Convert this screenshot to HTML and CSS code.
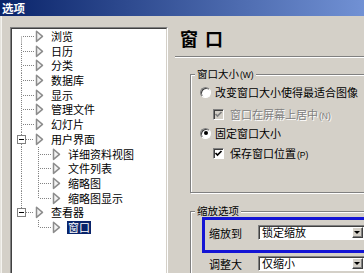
FILE: index.html
```html
<!DOCTYPE html>
<html>
<head>
<meta charset="utf-8">
<link rel="stylesheet" href="styles.css">
</head>
<body>
<div class="window">
  <div class="titlebar">选项</div>
  <div class="main">
    <div class="tree-outer">
      <div class="tree">
        <div class="row"><svg class="guide l1" viewBox="0 0 23 14.7"><path d="M9.5 7.5V14.7M11 7.5H22"/></svg><svg class="ico" viewBox="0 0 9 14.7"><path d="M1.5 2.3L7.5 7.35L1.5 12.4Z"/></svg><span class="lbl">浏览</span></div>
        <div class="row"><svg class="guide l1" viewBox="0 0 23 14.7"><path d="M9.5 0V14.7M11 7.5H22"/></svg><svg class="ico" viewBox="0 0 9 14.7"><path d="M1.5 2.3L7.5 7.35L1.5 12.4Z"/></svg><span class="lbl">日历</span></div>
        <div class="row"><svg class="guide l1" viewBox="0 0 23 14.7"><path d="M9.5 0V14.7M11 7.5H22"/></svg><svg class="ico" viewBox="0 0 9 14.7"><path d="M1.5 2.3L7.5 7.35L1.5 12.4Z"/></svg><span class="lbl">分类</span></div>
        <div class="row"><svg class="guide l1" viewBox="0 0 23 14.7"><path d="M9.5 0V14.7M11 7.5H22"/></svg><svg class="ico" viewBox="0 0 9 14.7"><path d="M1.5 2.3L7.5 7.35L1.5 12.4Z"/></svg><span class="lbl">数据库</span></div>
        <div class="row"><svg class="guide l1" viewBox="0 0 23 14.7"><path d="M9.5 0V14.7M11 7.5H22"/></svg><svg class="ico" viewBox="0 0 9 14.7"><path d="M1.5 2.3L7.5 7.35L1.5 12.4Z"/></svg><span class="lbl">显示</span></div>
        <div class="row"><svg class="guide l1" viewBox="0 0 23 14.7"><path d="M9.5 0V14.7M11 7.5H22"/></svg><svg class="ico" viewBox="0 0 9 14.7"><path d="M1.5 2.3L7.5 7.35L1.5 12.4Z"/></svg><span class="lbl">管理文件</span></div>
        <div class="row"><svg class="guide l1" viewBox="0 0 23 14.7"><path d="M9.5 0V14.7M11 7.5H22"/></svg><svg class="ico" viewBox="0 0 9 14.7"><path d="M1.5 2.3L7.5 7.35L1.5 12.4Z"/></svg><span class="lbl">幻灯片</span></div>
        <div class="row"><svg class="guide l1" viewBox="0 0 23 14.7"><path d="M9.5 0V3M9.5 12V14.7M14 7.5H22"/><rect class="box" x="5.5" y="3.5" width="8" height="8"/><path class="minus" d="M7 7.5H12"/></svg><svg class="ico" viewBox="0 0 9 14.7"><path d="M1.5 2.3L7.5 7.35L1.5 12.4Z"/></svg><span class="lbl">用户界面</span></div>
        <div class="row"><svg class="guide l2" viewBox="0 0 40 14.7"><path d="M9.5 0V14.7M26.5 0V14.7M28 7.5H39"/></svg><svg class="ico" viewBox="0 0 9 14.7"><path d="M1.5 2.3L7.5 7.35L1.5 12.4Z"/></svg><span class="lbl">详细资料视图</span></div>
        <div class="row"><svg class="guide l2" viewBox="0 0 40 14.7"><path d="M9.5 0V14.7M26.5 0V14.7M28 7.5H39"/></svg><svg class="ico" viewBox="0 0 9 14.7"><path d="M1.5 2.3L7.5 7.35L1.5 12.4Z"/></svg><span class="lbl">文件列表</span></div>
        <div class="row"><svg class="guide l2" viewBox="0 0 40 14.7"><path d="M9.5 0V14.7M26.5 0V14.7M28 7.5H39"/></svg><svg class="ico" viewBox="0 0 9 14.7"><path d="M1.5 2.3L7.5 7.35L1.5 12.4Z"/></svg><span class="lbl">缩略图</span></div>
        <div class="row"><svg class="guide l2" viewBox="0 0 40 14.7"><path d="M9.5 0V14.7M26.5 0V7.5M28 7.5H39"/></svg><svg class="ico" viewBox="0 0 9 14.7"><path d="M1.5 2.3L7.5 7.35L1.5 12.4Z"/></svg><span class="lbl">缩略图显示</span></div>
        <div class="row"><svg class="guide l1" viewBox="0 0 23 14.7"><path d="M9.5 0V3M14 7.5H22"/><rect class="box" x="5.5" y="3.5" width="8" height="8"/><path class="minus" d="M7 7.5H12"/></svg><svg class="ico" viewBox="0 0 9 14.7"><path d="M1.5 2.3L7.5 7.35L1.5 12.4Z"/></svg><span class="lbl">查看器</span></div>
        <div class="row"><svg class="guide l2" viewBox="0 0 40 14.7"><path d="M26.5 0V7.5M28 7.5H39"/></svg><svg class="ico" viewBox="0 0 9 14.7"><path d="M1.5 2.3L7.5 7.35L1.5 12.4Z"/></svg><span class="lbl sel">窗口</span></div>
      </div>
    </div>
    <div class="pane">
      <div class="page-title">窗口</div>
      <div class="sep"></div>
      <fieldset class="group g1">
        <legend>窗口大小<span class="key">(W)</span></legend>
        <div class="opt radio-row r1"><span class="radio"></span><span>改变窗口大小使得最适合图像</span></div>
        <div class="opt check-row c1 disabled"><span class="check"><svg viewBox="0 0 9 9"><path d="M1.5 4L3.5 6L7.5 2"/></svg></span><span class="txt">窗口在屏幕上居中<span class="key">(N)</span></span></div>
        <div class="opt radio-row r2"><span class="radio"><span class="dot"></span></span><span>固定窗口大小</span></div>
        <div class="opt check-row c2"><span class="check"><svg viewBox="0 0 9 9"><path d="M1.5 4L3.5 6L7.5 2"/></svg></span><span class="txt">保存窗口位置<span class="key">(P)</span></span></div>
      </fieldset>
      <fieldset class="group g2">
        <legend>缩放选项</legend>
        <div class="zoombox">
          <div class="field"><span class="flabel">缩放到</span><div class="combo"><span class="ctext">锁定缩放</span><span class="btn"><span class="arrow"></span></span></div></div>
        </div>
        <div class="field f2"><span class="flabel">调整大</span><div class="combo"><span class="ctext">仅缩小</span><span class="btn"><span class="arrow"></span></span></div></div>
      </fieldset>
    </div>
  </div>
</div>
</body>
</html>
```
FILE: styles.css
```css
html, body {
  margin: 0;
  padding: 0;
}
body {
  width: 364px;
  height: 273px;
  overflow: hidden;
  background: #d4d0c8;
  font-family: "Noto Sans CJK SC", "Noto Sans", sans-serif;
  font-size: 11px;
  color: #000;
}
.window {
  height: 273px;
  overflow: hidden;
  box-shadow: inset 1px 0 #e6e4de, inset 2px 0 #f4f3ef;
}
.titlebar {
  height: 16px;
  line-height: 16px;
  padding-left: 2px;
  background: linear-gradient(to right, #0a246a, #7191d4);
  color: #fff;
  font-weight: 700;
  font-size: 11.5px;
}
.main {
  display: flex;
  align-items: flex-start;
  height: 257px;
  overflow: hidden;
}
.tree-outer {
  flex: none;
  margin: 11px 0 0 10px;
  width: 158px;
  height: 246px;
  box-sizing: border-box;
  border: 1px solid;
  border-bottom: 0;
  border-color: #808080 #fff #fff #808080;
}
.tree {
  height: 100%;
  box-sizing: border-box;
  border: 1px solid;
  border-bottom: 0;
  border-color: #404040 #d4d0c8 #d4d0c8 #404040;
  background: #fff;
}
.row {
  display: flex;
  align-items: center;
  height: 14.7px;
  line-height: 14.7px;
  white-space: nowrap;
}
.guide {
  flex: none;
  height: 14.7px;
}
.guide.l1 { width: 23px; }
.guide.l2 { width: 40px; }
.guide path {
  stroke: #808080;
  stroke-width: 1;
  stroke-dasharray: 1 1;
  fill: none;
}
.guide .box {
  fill: #fff;
  stroke: #808080;
  stroke-width: 1;
}
.guide path.minus {
  stroke: #000;
  stroke-dasharray: none;
}
.ico {
  flex: none;
  width: 9px;
  height: 14.7px;
  margin-right: 7px;
}
.ico path {
  fill: #f2f2f2;
  stroke: #8c8c8c;
  stroke-width: 1.5;
  stroke-linejoin: round;
}
.lbl.sel {
  background: #0a246a;
  color: #fff;
  padding: 0 1px;
  margin-left: -1px;
  line-height: 13px;
}
.pane {
  flex: none;
  width: 194px;
  height: 257px;
  overflow: hidden;
  margin-left: 2px;
}
.page-title {
  margin: 10.5px 0 0 10px;
  font-size: 18px;
  line-height: 22px;
  font-weight: 700;
  letter-spacing: 7px;
}
.sep {
  margin: 7.5px -30px 0 5px;
  border-top: 1px solid #808080;
  border-bottom: 1px solid #fff;
}
.group {
  margin: 10px 0 0 20px;
  padding: 0;
  width: 190px;
  min-width: 0;
  border: 1px solid #808080;
  box-shadow: inset 1px 1px #fff, 1px 1px #fff;
}
.group legend {
  margin-left: 4px;
  padding: 0 2px;
  font-size: 10.5px;
  line-height: 12px;
  background: #d4d0c8;
}
.key {
  font-family: "Liberation Sans", sans-serif;
  font-size: 8.5px;
  margin-left: 1px;
}
.g1 { padding-bottom: 31px; }
.opt {
  display: flex;
  align-items: center;
  height: 16px;
  white-space: nowrap;
}
.radio-row { padding-left: 9px; }
.check-row { padding-left: 22px; }
.r1 { margin-top: 3px; }
.c1 { margin-top: 6px; }
.r2 { margin-top: 3px; }
.c2 { margin-top: 4px; }
.radio {
  flex: none;
  width: 11px;
  height: 11px;
  box-sizing: border-box;
  border-radius: 50%;
  border: 1px solid;
  border-color: #808080 #fff #fff #808080;
  box-shadow: inset 1px 1px #404040;
  background: #fff;
  margin-right: 4px;
  display: flex;
  align-items: center;
  justify-content: center;
}
.radio .dot {
  width: 4px;
  height: 4px;
  border-radius: 50%;
  background: #000;
}
.check {
  flex: none;
  width: 11px;
  height: 11px;
  box-sizing: border-box;
  border: 1px solid;
  border-color: #808080 #fff #fff #808080;
  box-shadow: inset 1px 1px #404040;
  background: #fff;
  margin-right: 6px;
  display: flex;
}
.check svg {
  width: 9px;
  height: 9px;
}
.check path {
  fill: none;
  stroke: #000;
  stroke-width: 1.7;
}
.disabled .check { background: #d4d0c8; }
.disabled .check path { stroke: #808080; }
.disabled .txt {
  color: #808080;
  text-shadow: 1px 1px 0 #fff;
}
.g2 {
  margin-top: 12px;
  padding-bottom: 20px;
}
.zoombox {
  margin-left: 11px;
  width: 170px;
  border: 3px solid #1414d4;
  padding: 5px 0 10px 4px;
}
.field {
  display: flex;
  align-items: center;
  height: 15px;
  white-space: nowrap;
}
.f2 {
  margin: 3px 0 0 18px;
}
.flabel {
  flex: none;
  width: 49px;
}
.combo {
  flex: none;
  width: 107px;
  height: 15px;
  box-sizing: border-box;
  border: 1px solid;
  border-color: #808080 #fff #fff #808080;
  box-shadow: inset 1px 1px #404040;
  background: #fff;
  display: flex;
  align-items: center;
  padding: 0 1px 0 3px;
}
.ctext { line-height: 13px; }
.btn {
  margin-left: auto;
  width: 11px;
  height: 11px;
  box-sizing: border-box;
  border: 1px solid;
  border-color: #fff #404040 #404040 #fff;
  box-shadow: inset -1px -1px #808080;
  background: #d4d0c8;
  display: flex;
  align-items: center;
  justify-content: center;
}
.arrow {
  width: 0;
  height: 0;
  border-left: 3px solid transparent;
  border-right: 3px solid transparent;
  border-top: 3px solid #000;
  margin: 0 1px 1px 0;
}
```
